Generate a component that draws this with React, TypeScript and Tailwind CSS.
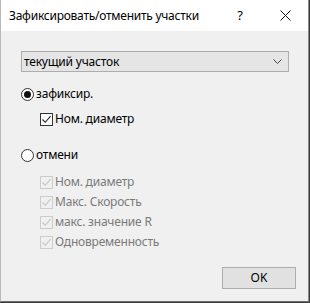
import React from "react";

const font = { fontFamily: '"Noto Sans", "Liberation Sans", sans-serif' };

function Radio({ checked, label }: { checked: boolean; label: string }) {
  return (
    <div className="flex items-center h-[14px]">
      <span className="w-[13px] h-[13px] rounded-full border border-[#333] bg-white flex items-center justify-center">
        {checked && <span className="w-[7px] h-[7px] rounded-full bg-[#111]" />}
      </span>
      <span className="ml-[2px] text-[12px] tracking-[-0.2px] text-black leading-none">{label}</span>
    </div>
  );
}

function Check({ label, disabled }: { label: string; disabled?: boolean }) {
  return (
    <div className="flex items-center h-[14px]">
      <span
        className={
          disabled
            ? "w-[13px] h-[13px] border border-[#cccccc] bg-[#f0f0f0] flex items-center justify-center"
            : "w-[13px] h-[13px] border border-[#333] bg-white flex items-center justify-center"
        }
      >
        <svg width="11" height="11" viewBox="0 0 11 11">
          <path
            d="M1.5 5.5 L4.2 8.3 L9.6 2.2"
            fill="none"
            stroke={disabled ? "#c4c4c4" : "#222"}
            strokeWidth="1.1"
          />
        </svg>
      </span>
      <span
        className={
          disabled
            ? "ml-[2px] text-[12px] tracking-[-0.2px] text-[#7a7a7a] leading-none"
            : "ml-[2px] text-[12px] tracking-[-0.2px] text-black leading-none"
        }
      >
        {label}
      </span>
    </div>
  );
}

export default function App() {
  return (
    <div className="w-[310px] h-[303px] flex bg-[#3a3a3a]" style={font}>
      <div className="w-[309px] h-[302px] flex flex-col border-l border-r border-b border-l-[#b9b9b9] border-r-[#8a8a8a] border-b-[#6e6e6e]">
        <div className="h-[31px] bg-white flex items-center pl-[8px] shrink-0">
          <span className="text-[12px] tracking-[-0.25px] text-black">Зафиксировать/отменить участки</span>
          <span className="ml-auto w-[16px] text-center text-[13px] text-black">?</span>
          <span className="ml-[29px] mr-[15px] w-[16px] flex justify-center">
            <svg width="11" height="11" viewBox="0 0 11 11">
              <path d="M0.5 0.5 L10.5 10.5 M10.5 0.5 L0.5 10.5" stroke="#111" strokeWidth="1" />
            </svg>
          </span>
        </div>
        <div className="flex-1 bg-[#f0f0f0] flex flex-col pl-[20px] pr-[11px] pt-[20px]">
          <div className="h-[21px] w-[268px] border border-[#adadad] bg-[#e5e5e5] flex items-center pl-[2px] pr-[6px]">
            <span className="text-[12px] tracking-[-0.2px] text-black">текущий участок</span>
            <svg className="ml-auto" width="9" height="5" viewBox="0 0 9 5">
              <path d="M0.5 0.5 L4.5 4.5 L8.5 0.5" fill="none" stroke="#444" strokeWidth="1" />
            </svg>
          </div>
          <div className="mt-[15px]">
            <Radio checked label="зафиксир." />
          </div>
          <div className="mt-[11px] pl-[19px]">
            <Check label="Ном. диаметр" />
          </div>
          <div className="mt-[22px]">
            <Radio checked={false} label="отмени" />
          </div>
          <div className="mt-[13px] pl-[19px] flex flex-col gap-[6px]">
            <Check disabled label="Ном. диаметр" />
            <Check disabled label="Макс. Скорость" />
            <Check disabled label="макс. значение R" />
            <Check disabled label="Одновременность" />
          </div>
          <div className="mt-auto mb-[12px] flex justify-end pr-[1px]">
            <button className="w-[74px] h-[22px] border border-[#adadad] bg-[#e1e1e1] text-[12px] text-black">
              OK
            </button>
          </div>
        </div>
      </div>
    </div>
  );
}
